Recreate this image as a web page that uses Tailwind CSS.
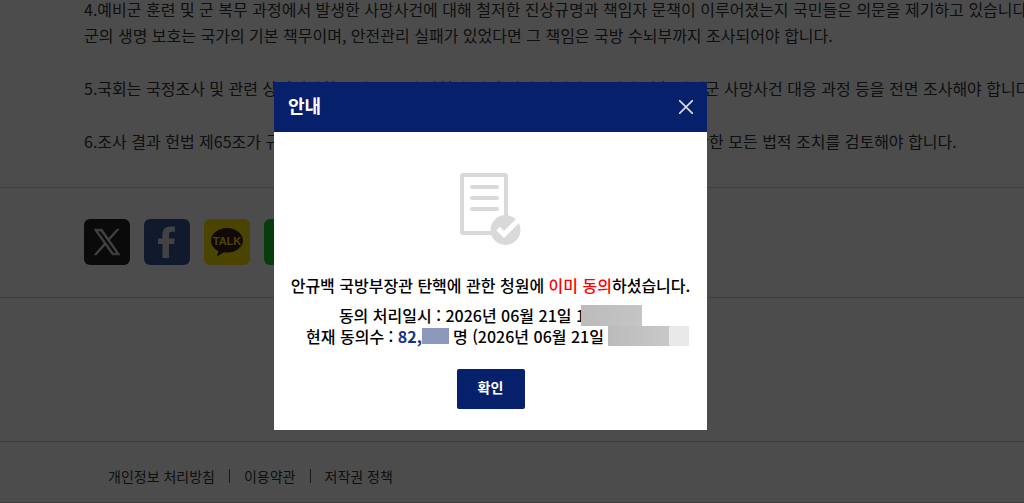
<!DOCTYPE html>
<html lang="ko">
<head>
    <meta charset="UTF-8">
    <meta name="viewport" content="width=device-width, initial-scale=1.0">
    <title>안내</title>
    <script src="https://cdn.jsdelivr.net/npm/@tailwindcss/browser@4"></script>
</head>
<body class="h-screen overflow-hidden bg-white font-['Noto_Sans_CJK_KR',sans-serif] text-[#333]">
    <!-- 청원 본문 -->
    <main class="overflow-hidden">
        <div class="-mt-1 pl-21 pb-[33px] flex flex-col gap-[27px] text-base leading-[26px] whitespace-nowrap border-b border-[#ccc]">
            <p>4.예비군 훈련 및 군 복무 과정에서 발생한 사망사건에 대해 철저한 진상규명과 책임자 문책이 이루어졌는지 국민들은 의문을 제기하고 있습니다. 장병과<br>군의 생명 보호는 국가의 기본 책무이며, 안전관리 실패가 있었다면 그 책임은 국방 수뇌부까지 조사되어야 합니다.</p>
            <p>5.국회는 국정조사 및 관련 상임위원회 조사를 통해 방첩사 해체 결정 과정과 군 인사 의혹 예비군 사망사건 대응 과정 등을 전면 조사해야 합니다.</p>
            <p>6.조사 결과 헌법 제65조가 규정한 직무집행상 위법이 있다면 즉시 국방부장관 탄핵소추를 포함한 모든 법적 조치를 검토해야 합니다.</p>
        </div>

        <!-- 공유 버튼 -->
        <div class="pl-21 pt-[31px] pb-8 flex gap-[14px] border-b border-[#ccc]">
            <a href="#" aria-label="X" class="size-[46px] rounded-md bg-[#222] flex items-center justify-center">
                <svg class="size-7" viewBox="0 0 24 24" fill="#ddd" stroke="#ddd" stroke-width=".6"><path d="M14.2 10.2 22.4 1h-2L13.3 9 7.7 1H1l8.600 12.100L1 23h2l7.500-8.500L16.500 23H23zM11.500 13.200l-.9-1.200L3.700 2.500h3L12.300 10.300l.9 1.200 7.200 10.100h-3z"/></svg>
            </a>
            <a href="#" aria-label="페이스북" class="size-[46px] rounded-md bg-[#3b5998] flex items-center justify-center">
                <svg class="h-8 w-5" viewBox="0 0 20 32" fill="#ddd"><path d="M5.500 32V18H1v-5.500h4.500V8.500C5.500 3.200 8.500.5 13.800.5c1.800 0 3.400.1 4.200.3v5h-3c-2.500 0-3 1.300-3 3v3.700h5.800L17 18h-5v14z"/></svg>
            </a>
            <a href="#" aria-label="카카오톡" class="size-[46px] rounded-md bg-[#fae100] flex items-center justify-center">
                <svg class="w-8 h-[30px]" viewBox="0 0 32 30"><path fill="#371d1e" d="M16 1C7.200 1 0 6.600 0 13.500c0 4.500 3 8.400 7.500 10.600L6 29.500l6.800-4.200c1 .2 2.100.3 3.200.3 8.800 0 16-5.500 16-12.100S24.800 1 16 1z"/><text x="16" y="17.500" text-anchor="middle" font-family="Liberation Sans, sans-serif" font-size="11" font-weight="bold" fill="#fae100">TALK</text></svg>
            </a>
            <a href="#" aria-label="네이버" class="size-[46px] rounded-md bg-[#1ec82c]"></a>
        </div>
    </main>

    <footer class="mt-[143px] border-y border-[#ccc] pl-27 pt-[22px] pb-[14px]">
        <nav class="flex items-center text-sm leading-6">
            <a href="#">개인정보 처리방침</a>
            <span class="mx-[14px] h-[14px] w-px bg-[#555]"></span>
            <a href="#">이용약관</a>
            <span class="mx-[14px] h-[14px] w-px bg-[#555]"></span>
            <a href="#">저작권 정책</a>
        </nav>
    </footer>

    <!-- 안내 팝업 -->
    <div class="fixed inset-0 bg-black/70 flex items-start justify-center pt-[82px] pr-[43px]">
        <section role="dialog" aria-labelledby="popup-title" class="w-[433px] bg-white text-black">
            <header class="h-[50px] px-[14px] flex items-center justify-between bg-[#07206c] text-white">
                <h1 id="popup-title" class="pb-1 text-lg font-bold">안내</h1>
                <button type="button" aria-label="닫기">
                    <svg class="size-[14px]" viewBox="0 0 14 14" fill="none" stroke="#dde" stroke-width="1.6"><path d="M0 0l14 14M14 0 0 14"/></svg>
                </button>
            </header>
            <div class="pt-[41px] pb-[21px] flex flex-col items-center text-center text-base font-medium whitespace-nowrap">
                <svg class="w-[61px] h-[73px]" viewBox="0 0 61 73" fill="none">
                    <rect x="2" y="2" width="44" height="58" rx="1" stroke="#d9d9d9" stroke-width="4"/>
                    <path d="M12 14h25M12 25h25M12 36h25" stroke="#d9d9d9" stroke-width="4" stroke-linecap="round"/>
                    <circle cx="45.5" cy="57" r="15" fill="#d9d9d9"/>
                    <path d="M38 55.500l6 6L58.500 47" stroke="#fff" stroke-width="5"/>
                </svg>
                <p class="mt-[27px] leading-6">안규백 국방부장관 탄핵에 관한 청원에 <span class="text-[#f00]">이미 동의</span>하셨습니다.</p>
                <p class="mt-2 flex items-center leading-[21px]">동의 처리일시 : 2026년 06월 21일 1<span class="-ml-1 h-[21px] w-[61px] bg-linear-to-r from-[#bbb] to-[#c5c5c5]"></span></p>
                <p class="-mr-[14px] flex items-center leading-5">
                    <span>현재 동의수 : <span class="font-bold text-[#1a3380]">82,</span></span>
                    <span class="mr-1 h-4 w-[27px] bg-[#8c99bd]"></span>
                    <span>명 (2026년 06월 21일</span>
                    <span class="ml-1 h-5 w-[61px] bg-linear-to-r from-[#bbb] to-[#c8c8c8]"></span><span class="h-5 w-5 bg-[#e9e9e9]"></span>
                </p>
                <button type="button" class="mt-[23px] h-10 w-[68px] rounded-xs bg-[#07206c] pb-1 text-sm font-bold text-white">확인</button>
            </div>
        </section>
    </div>
</body>
</html>
